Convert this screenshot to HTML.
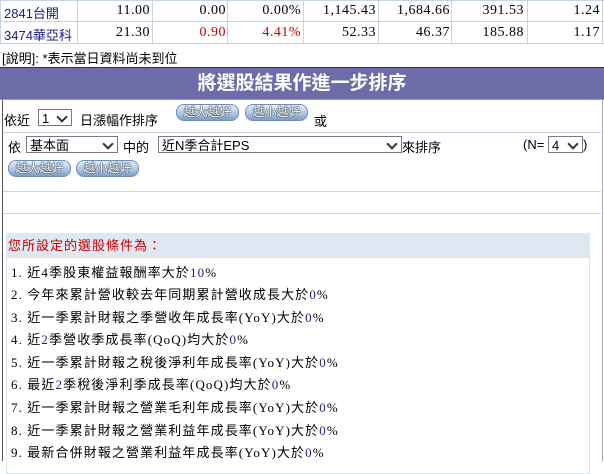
<!DOCTYPE html>
<html><head><meta charset="utf-8"><style>
body{margin:0;width:604px;height:461px;background:#fff;position:relative;overflow:hidden;font-family:"Liberation Sans","Noto Sans CJK TC",sans-serif;font-size:13px;color:#000}
.a{position:absolute;white-space:nowrap}
.c{position:absolute;top:0;height:43px;width:1px;background:#c5d5e5}
.h{position:absolute;left:0;width:604px;height:1px;background:#c5d5e5}
.n{position:absolute;text-align:right;white-space:nowrap;font-family:"Liberation Serif",serif;font-size:14px;letter-spacing:0.5px}
.btn{position:absolute;height:15px;width:61px;border-radius:8px;border:1px solid #6f8fb5;background:linear-gradient(#e8f0fa,#a9c3e2 60%,#7d9fc9);color:#fff;font-size:12px;line-height:15px;text-align:center;text-shadow:0 0 1px #234,0 0 1px #234,0 0 1px #234}
.sel{position:absolute;border:1px solid #7a7a7a;background:#fff;height:17px;line-height:17px;padding-left:3px;box-sizing:border-box;font-size:13px}
.sel:after{content:"";position:absolute;right:5px;top:3px;width:6px;height:6px;border-right:2px solid #333;border-bottom:2px solid #333;transform:rotate(45deg)}
.li{position:absolute;left:11px;font-size:13px;letter-spacing:1.1px;font-family:"Liberation Serif","Noto Sans CJK TC",serif}
.b{color:#22228a}
</style></head><body>
<div class="h" style="top:0"></div><div class="h" style="top:21px"></div><div class="h" style="top:43px"></div>
<div class="c" style="left:0"></div><div class="c" style="left:77px"></div><div class="c" style="left:152px"></div><div class="c" style="left:227px"></div><div class="c" style="left:303px"></div><div class="c" style="left:378px"></div><div class="c" style="left:451px"></div><div class="c" style="left:527px"></div><div class="c" style="left:602px"></div>
<div class="a" style="left:4px;top:3px;color:#1a1a80">2841台開</div>
<div class="a" style="left:4px;top:25px;color:#1a1a80">3474華亞科</div>
<div class="n" style="right:454px;top:3px">11.00</div><div class="n" style="right:378px;top:3px">0.00</div><div class="n" style="right:303px;top:3px">0.00%</div><div class="n" style="right:228px;top:3px">1,145.43</div><div class="n" style="right:154px;top:3px">1,684.66</div><div class="n" style="right:80px;top:3px">391.53</div><div class="n" style="right:4px;top:3px">1.24</div>
<div class="n" style="right:454px;top:25px">21.30</div><div class="n" style="right:378px;top:25px;color:#c00">0.90</div><div class="n" style="right:303px;top:25px;color:#c00">4.41%</div><div class="n" style="right:228px;top:25px">52.33</div><div class="n" style="right:154px;top:25px">46.37</div><div class="n" style="right:80px;top:25px">185.88</div><div class="n" style="right:4px;top:25px">1.17</div>
<div class="a" style="left:2px;top:48px">[說明]: *表示當日資料尚未到位</div>
<div class="a" style="left:0;top:67px;width:604px;height:31px;background:#6c6ca8;border-top:1px solid #334;border-bottom:1px solid #99a;color:#fff;font-weight:bold;font-size:19px;line-height:31px;text-align:center">將選股結果作進一步排序</div>
<div style="position:absolute;left:2px;top:100px;width:599px;height:361px;border-left:1px solid #555;border-right:1px solid #aac"></div>
<div class="h" style="top:132px;left:3px;width:598px"></div>
<div class="a" style="left:4px;top:110px">依近</div>
<div class="sel" style="left:38px;top:109px;width:34px">1</div>
<div class="a" style="left:80px;top:110px">日漲幅作排序</div>
<div class="btn" style="left:176px;top:104px">越大越好</div>
<div class="btn" style="left:245px;top:104px">越小越好</div>
<div class="a" style="left:314px;top:111px">或</div>
<div class="a" style="left:8px;top:137px">依</div>
<div class="sel" style="left:26px;top:136px;width:92px">基本面</div>
<div class="a" style="left:123px;top:137px">中的</div>
<div class="sel" style="left:158px;top:136px;width:244px">近N季合計EPS</div>
<div class="a" style="left:402px;top:137px">來排序</div>
<div class="a" style="left:523px;top:137px">(N=</div>
<div class="sel" style="left:548px;top:136px;width:35px">4</div>
<div class="a" style="left:583px;top:137px">)</div>
<div class="btn" style="left:8px;top:160px">越大越好</div>
<div class="btn" style="left:76px;top:160px">越小越好</div>
<div class="h" style="top:191px;left:3px;width:598px"></div>
<div class="h" style="top:213px;left:3px;width:598px"></div>
<div style="position:absolute;left:6px;top:233px;width:582px;height:240px;border:1px solid #dbe6f0;border-top:none;background:#fff"></div>
<div class="a" style="left:6px;top:233px;width:582px;height:25px;background:#dde8f2;color:#c00;font-size:13px;line-height:25px;padding-left:2px;letter-spacing:1px">您所設定的選股條件為：</div>
<div class="li" style="top:262px">1. 近4季股東權益報酬率大於<span class="b">10</span>%</div>
<div class="li" style="top:284px">2. 今年來累計營收較去年同期累計營收成長大於<span class="b">0</span>%</div>
<div class="li" style="top:307px">3. 近一季累計財報之季營收年成長率(YoY)大於<span class="b">0</span>%</div>
<div class="li" style="top:329px">4. 近<span class="b">2</span>季營收季成長率(QoQ)均大於<span class="b">0</span>%</div>
<div class="li" style="top:352px">5. 近一季累計財報之稅後淨利年成長率(YoY)大於<span class="b">0</span>%</div>
<div class="li" style="top:374px">6. 最近<span class="b">2</span>季稅後淨利季成長率(QoQ)均大於<span class="b">0</span>%</div>
<div class="li" style="top:397px">7. 近一季累計財報之營業毛利年成長率(YoY)大於<span class="b">0</span>%</div>
<div class="li" style="top:420px">8. 近一季累計財報之營業利益年成長率(YoY)大於<span class="b">0</span>%</div>
<div class="li" style="top:442px">9. 最新合併財報之營業利益年成長率(YoY)大於<span class="b">0</span>%</div>
</body></html>
